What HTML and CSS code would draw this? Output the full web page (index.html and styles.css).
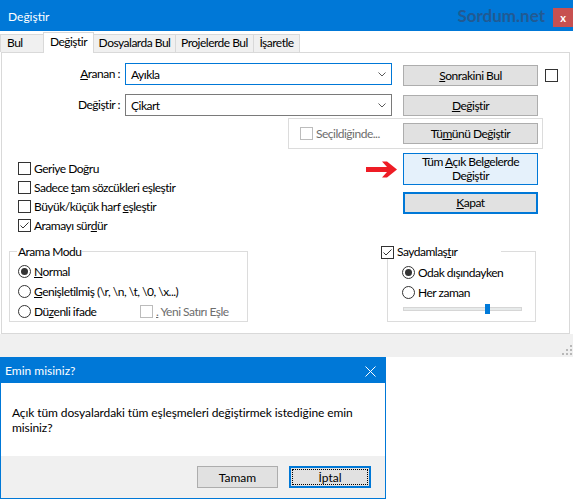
FILE: index.html
```html
<!DOCTYPE html>
<html lang="tr">
<head>
<meta charset="utf-8">
<title>Değiştir</title>
<link rel="stylesheet" href="styles.css">
</head>
<body>
<div class="win">
  <div class="titlebar">
    <span class="title">Değiştir</span>
    <span class="brand">Sordum.net</span>
    <span class="close">x</span>
  </div>
  <div class="tabstrip">
    <div class="tab t-bul">Bul</div>
    <div class="tab active t-deg">Değiştir</div>
    <div class="tab t-dos">Dosyalarda Bul</div>
    <div class="tab t-pro">Projelerde Bul</div>
    <div class="tab t-isa">İşaretle</div>
  </div>
  <div class="panel">
    <div class="row row-find">
      <span class="flabel"><u>A</u>ranan :</span>
      <div class="combo focus"><span>Ayıkla</span><svg class="chev" width="8" height="5" viewBox="0 0 8 5"><polyline points="0.5,0.5 4,4 7.5,0.5" fill="none" stroke="#5a5a5a" stroke-width="1"/></svg></div>
      <div class="btn"><span><u>S</u>onrakini Bul</span></div>
      <span class="box side"></span>
    </div>
    <div class="row row-rep">
      <span class="flabel">Değiştir :</span>
      <div class="combo"><span>Çikart</span><svg class="chev" width="8" height="5" viewBox="0 0 8 5"><polyline points="0.5,0.5 4,4 7.5,0.5" fill="none" stroke="#5a5a5a" stroke-width="1"/></svg></div>
      <div class="btn"><span><u>D</u>eğiştir</span></div>
    </div>
    <div class="selgroup">
      <span class="box dis"></span>
      <span class="lbl dis-text">Seçildiğinde...</span>
      <div class="btn"><span>Tü<u>m</u>ünü Değiştir</span></div>
    </div>
    <div class="middle">
      <div class="checks">
        <div class="chk"><span class="box"></span><span class="lbl">Geriye Doğru</span></div>
        <div class="chk"><span class="box"></span><span class="lbl">Sadece <u>t</u>am sözcükleri eşleştir</span></div>
        <div class="chk"><span class="box"></span><span class="lbl">Büyük/küçük harf <u>e</u>şleştir</span></div>
        <div class="chk"><span class="box"><svg width="11" height="11" viewBox="0 0 11 11"><polyline points="1.5,5.5 4,8 9.5,2.5" fill="none" stroke="#333" stroke-width="1"/></svg></span><span class="lbl">Aramayı sür<u>d</u>ür</span></div>
      </div>
      <div class="actions">
        <div class="act-row">
          <svg class="arrow" width="31" height="17" viewBox="0 0 31 17"><polygon points="0,6 21,6 16,0.5 21,0.5 31,8.5 21,16.5 16,16.5 21,11 0,11" fill="#ee1c25"/></svg>
          <div class="btn btn-big"><span>Tüm <u>A</u>çık Belgelerde<br>Değiştir</span></div>
        </div>
        <div class="btn btn-def"><span><u>K</u>apat</span></div>
      </div>
    </div>
    <div class="bottom">
      <div class="group g-mode">
        <span class="legend">Arama Modu</span>
        <div class="rad first"><span class="rb on"></span><span class="lbl"><u>N</u>ormal</span></div>
        <div class="rad"><span class="rb"></span><span class="lbl"><u>G</u>enişletilmiş (\r, \n, \t, \0, \x...)</span></div>
        <div class="rad">
          <span class="rad-part"><span class="rb"></span><span class="lbl">Dü<u>z</u>enli ifade</span></span>
          <span class="box dis"></span><span class="lbl dis-text"><u>.</u> Yeni Satırı Eşle</span>
        </div>
      </div>
      <div class="group g-tr">
        <span class="legend legend-chk"><span class="box"><svg width="11" height="11" viewBox="0 0 11 11"><polyline points="1.5,5.5 4,8 9.5,2.5" fill="none" stroke="#333" stroke-width="1"/></svg></span><span class="lbl">Saydamlaş<u>t</u>ır</span></span>
        <div class="rad first"><span class="rb on"></span><span class="lbl">Odak dışındayken</span></div>
        <div class="rad"><span class="rb"></span><span class="lbl">Her zaman</span></div>
        <div class="slider"><div class="track"><span class="thumb"></span></div></div>
      </div>
    </div>
  </div>
  <div class="bottombar">
    <svg width="10" height="10" viewBox="0 0 10 10"><g fill="#b8b8b8"><rect x="8" y="0" width="2" height="2"/><rect x="4" y="4" width="2" height="2"/><rect x="8" y="4" width="2" height="2"/><rect x="0" y="8" width="2" height="2"/><rect x="4" y="8" width="2" height="2"/><rect x="8" y="8" width="2" height="2"/></g></svg>
  </div>
</div>
<div class="dlg">
  <div class="dlg-title">
    <span>Emin misiniz?</span>
    <svg class="dlg-x" width="11" height="11" viewBox="0 0 11 11"><path d="M0.5,0.5 L10.5,10.5 M10.5,0.5 L0.5,10.5" stroke="#fff" stroke-width="1" fill="none"/></svg>
  </div>
  <div class="dlg-body">Açık tüm dosyalardaki tüm eşleşmeleri değiştirmek istediğine emin<br>misiniz?</div>
  <div class="dlg-foot">
    <div class="dbtn">Tamam</div>
    <div class="dbtn def"><span class="fr">İptal</span></div>
  </div>
</div>
</body>
</html>
```

FILE: styles.css
```css
* { box-sizing: border-box; }
html, body { margin: 0; padding: 0; }
body {
  width: 573px;
  height: 499px;
  overflow: hidden;
  background: #fff;
  font-family: Lato, "Noto Sans", sans-serif;
  font-size: 12px;
  color: #000;
}
u { text-underline-offset: 1px; }

.win { height: 357px; display: flex; flex-direction: column; background: #fff; }

.titlebar { height: 31px; flex: none; background: #0078d7; display: flex; align-items: flex-start; color: #fff; }
.title { flex: 1; margin: 9px 0 0 8px; line-height: 15px; }
.brand { margin: 6px 8px 0 0; line-height: 20px; font-size: 17px; font-weight: bold; color: #215a93; }
.close { margin-top: 8px; width: 20px; height: 19px; background: #c75050; color: #fff; font-weight: bold; font-size: 11px; display: flex; align-items: center; justify-content: center; line-height: 1; }

.tabstrip { height: 21px; flex: none; display: flex; align-items: flex-end; letter-spacing: -0.5px; }
.tab { height: 18px; border: 1px solid #d9d9d9; border-bottom: none; background: #f0f0f0; line-height: 16px; margin-right: -1px; white-space: nowrap; text-align: center; }
.tab.active { height: 21px; background: #fff; margin-bottom: -1px; padding-top: 1px; position: relative; z-index: 1; }
.t-bul { width: 44px; text-align: left; padding-left: 6px; }
.t-deg { width: 51px; }
.t-dos { width: 83px; }
.t-pro { width: 79px; }
.t-isa { width: 47px; }

.panel { margin-left: 1px; width: 569px; height: 282px; flex: none; border: 1px solid #d9d9d9; background: #fff; letter-spacing: -0.5px; }

.bottombar { flex: 1; background: #f0f0f0; display: flex; justify-content: flex-end; align-items: flex-end; padding: 0 1px 2px 0; }

.row { display: flex; align-items: flex-start; }
.row-find { margin-top: 10px; }
.row-rep { margin-top: 8px; }
.flabel { width: 118px; margin-right: 5px; text-align: right; line-height: 22px; white-space: nowrap; }
.combo { width: 267px; height: 22px; border: 1px solid #7a7a7a; display: flex; align-items: center; justify-content: space-between; padding: 0 5px; }
.combo.focus { border-color: #0078d7; }
.chev { flex: none; }

.btn { width: 135px; height: 21px; flex: none; border: 1px solid #adadad; background: #e1e1e1; display: flex; align-items: center; justify-content: center; text-align: center; line-height: 14px; white-space: nowrap; }
.row-find .btn { margin: 2px 0 0 11px; }
.row-rep .btn { margin: 1px 0 0 11px; }
.box.side { margin: 6px 0 0 7px; }

.box { width: 13px; height: 13px; flex: none; border: 1px solid #333; background: #fff; display: flex; }
.box.dis { border-color: #bcbcbc; }
.dis-text { color: #6d6d6d; }
.lbl { margin-left: 3px; white-space: nowrap; line-height: 15px; }

.selgroup { margin: 2px 0 0 286px; width: 255px; height: 31px; border: 1px solid #dcdcdc; display: flex; align-items: center; padding: 0 4px 0 11px; }
.selgroup .btn { margin-left: auto; }

.middle { display: flex; align-items: flex-start; }
.checks { margin: 10px 0 0 16px; width: 348px; flex: none; }
.chk { display: flex; align-items: center; height: 19px; }
.actions { margin-top: 4px; display: flex; flex-direction: column; }
.act-row { display: flex; align-items: center; }
.arrow { margin-right: 6px; flex: none; }
.btn-big { height: 32px; background: #e5f1fb; border-color: #0078d7; }
.btn-def { height: 22px; border: 2px solid #0078d7; margin: 7px 0 0 37px; }

.bottom { display: flex; align-items: flex-start; margin-top: 16px; }
.group { height: 71px; border: 1px solid #dcdcdc; display: flex; flex-direction: column; align-items: flex-start; }
.legend { background: #fff; line-height: 15px; height: 15px; margin-top: -8px; padding: 0 1px; white-space: nowrap; }
.g-mode { margin-left: 7px; width: 239px; padding-left: 8px; }
.g-mode .legend { margin-left: -1px; }
.g-mode .rad.first { margin-top: 2px; }
.g-tr { margin-left: 139px; width: 149px; padding-left: 14px; }
.legend-chk { margin-left: -21px; width: 120px; padding: 0; display: flex; align-items: center; }
.legend-chk .box { margin-top: 1px; }
.g-tr .rad.first { margin-top: 3px; }

.rad { display: flex; align-items: center; height: 20px; }
.rad-part { display: flex; align-items: center; width: 122px; }
.rb { width: 13px; height: 13px; flex: none; border: 1px solid #333; border-radius: 50%; background: #fff; display: flex; align-items: center; justify-content: center; }
.rb.on::after { content: ""; width: 7px; height: 7px; border-radius: 50%; background: #333; }

.slider { width: 119px; height: 10px; margin: 2px 0 0 1px; display: flex; align-items: center; }
.track { width: 100%; height: 4px; background: #e7eaea; border: 1px solid #d6d6d6; display: flex; align-items: center; }
.thumb { flex: none; width: 5px; height: 10px; margin-left: 81px; background: #007ad9; }

.dlg { width: 386px; height: 142px; border: 1px solid #0078d7; border-top: none; display: flex; flex-direction: column; }
.dlg-title { height: 26px; flex: none; background: #0078d7; color: #fff; display: flex; align-items: center; justify-content: space-between; padding: 0 9px 0 4px; line-height: 15px; }
.dlg-x { margin-top: 3px; }
.dlg-body { height: 73px; flex: none; background: #fff; padding: 22px 0 0 11px; line-height: 15px; white-space: nowrap; letter-spacing: -0.1px; }
.dlg-foot { flex: 1; background: #f0f0f0; display: flex; justify-content: flex-end; align-items: flex-start; gap: 11px; padding: 10px 14px 0 0; }
.dbtn { width: 81px; height: 22px; border: 1px solid #adadad; background: #e1e1e1; display: flex; align-items: center; justify-content: center; }
.dbtn.def { width: 82px; border: 2px solid #0078d7; padding: 1px; }
.fr { width: 100%; height: 100%; border: 1px dotted #000; display: flex; align-items: center; justify-content: center; }
```
